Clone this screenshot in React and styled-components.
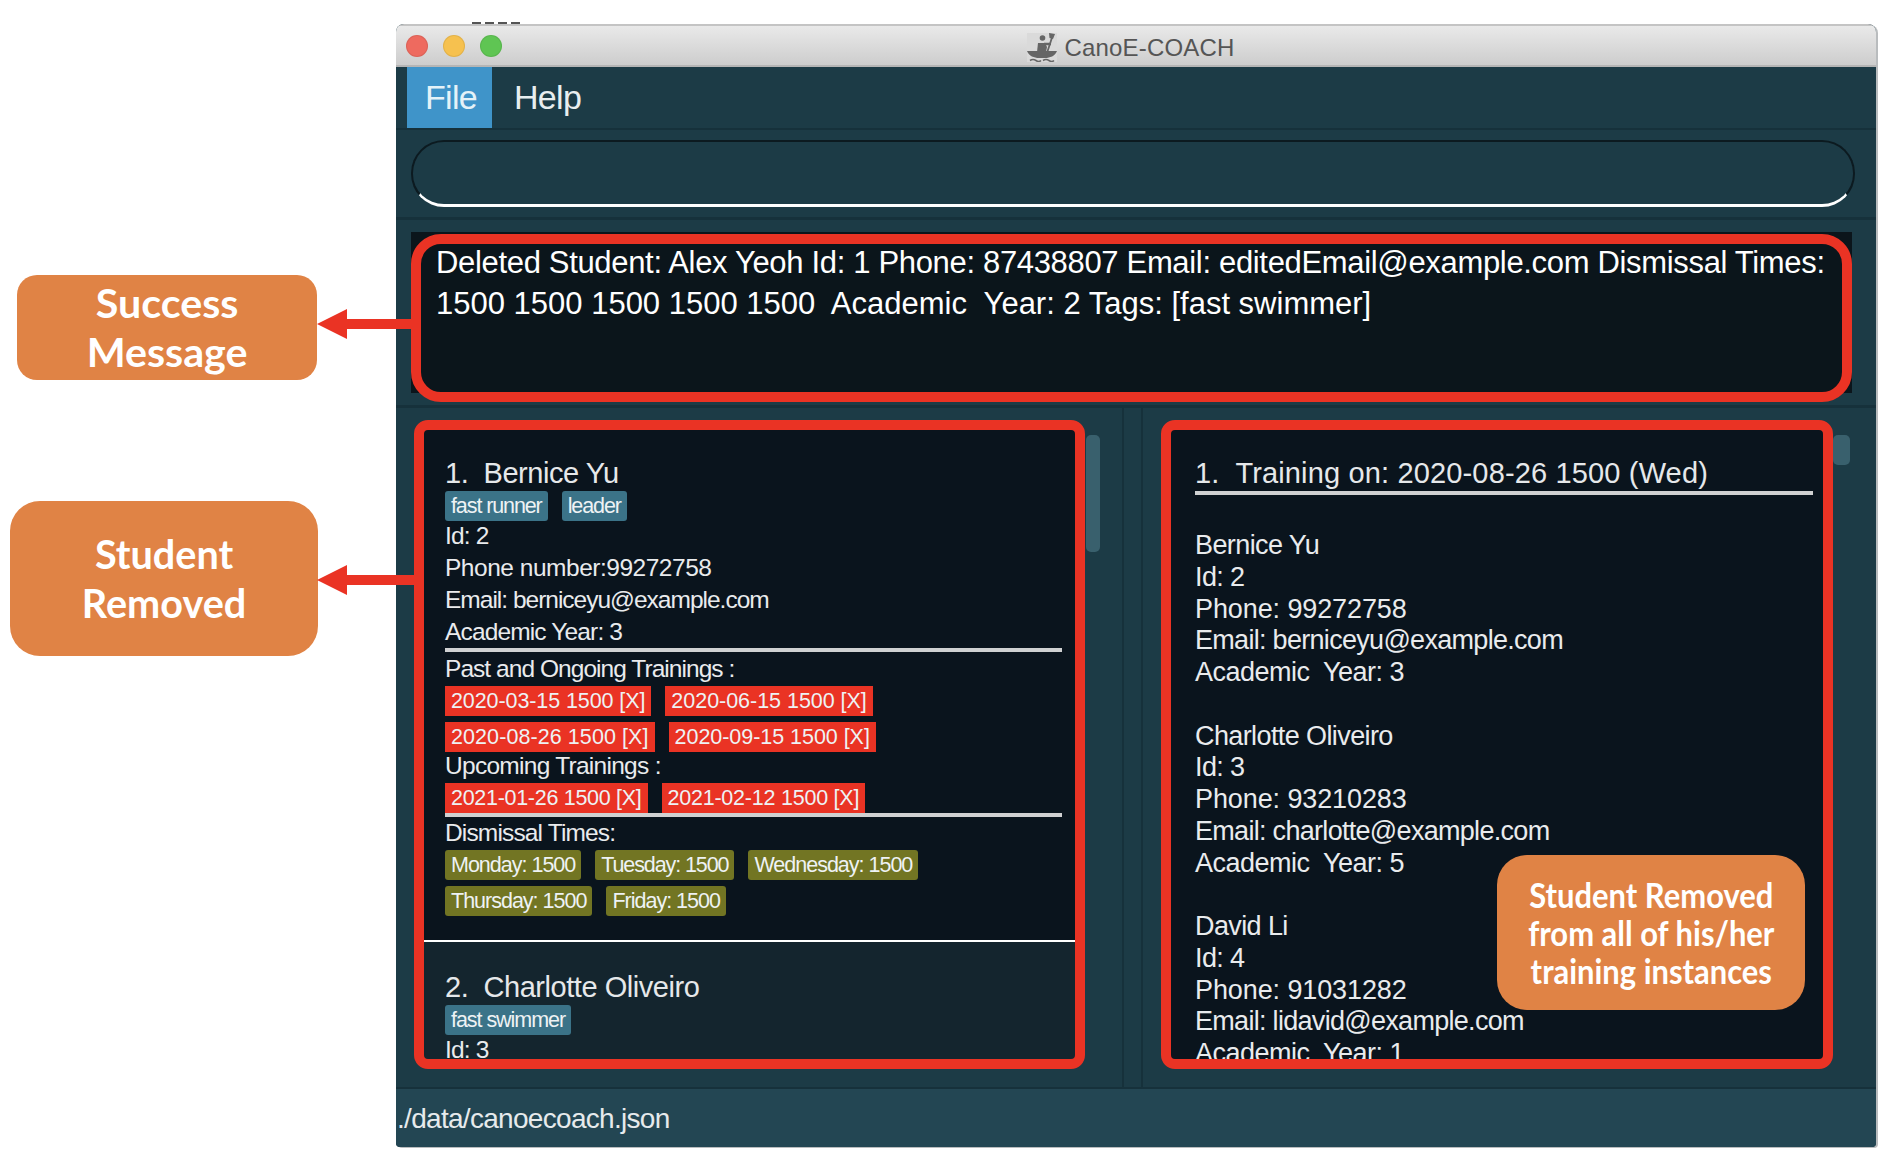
import React from "react";
import styled, { createGlobalStyle } from "styled-components";

const GlobalStyle = createGlobalStyle`
  html, body {
    margin: 0;
    padding: 0;
    background: #fff;
  }
  body {
    width: 1904px;
    height: 1174px;
    overflow: hidden;
    font-family: "Liberation Sans", Arial, sans-serif;
  }
`;

const Page = styled.div`
  position: relative;
  width: 1904px;
  height: 1174px;
  box-sizing: border-box;
  padding: 24px 0 0 396px;
`;

const BehindWindow = styled.div`
  position: absolute;
  left: 472px;
  top: 22px;
  width: 48px;
  height: 2px;
  background: repeating-linear-gradient(90deg, #555 0 9px, transparent 9px 13px);
`;

const Window = styled.div`
  width: 1480px;
  height: 1123px;
  display: flex;
  flex-direction: column;
  background: #1c3b46;
  border-radius: 8px 8px 4px 4px;
  overflow: hidden;
  box-shadow: 2px 1px 0 #b9bcbe;
`;

const TitleBar = styled.div`
  flex: 0 0 43px;
  box-sizing: border-box;
  position: relative;
  display: flex;
  align-items: center;
  justify-content: center;
  gap: 7px;
  padding: 4px 10px 0 0;
  background: linear-gradient(#e9e9e9, #cdcdcd);
  border-top: 2px solid #c4c4c4;
  border-bottom: 2px solid #b5b5b5;
  color: #555;
  font-size: 24px;
  letter-spacing: 0.2px;
`;

const Lights = styled.div`
  position: absolute;
  left: 10px;
  top: 9px;
  display: flex;
  gap: 15px;
`;

const Light = styled.span`
  width: 22px;
  height: 22px;
  border-radius: 50%;
  background: ${props => props.color};
  box-shadow: inset 0 0 0 1px rgba(0, 0, 0, 0.08);
`;

const MenuBar = styled.div`
  flex: 0 0 63px;
  box-sizing: border-box;
  display: flex;
  padding-left: 11px;
  gap: 4px;
  border-bottom: 2px solid #16313b;
`;

const MenuItem = styled.div`
  height: 61px;
  box-sizing: border-box;
  padding: 0 15px 0 18px;
  display: flex;
  align-items: center;
  font-size: 34px;
  letter-spacing: -0.7px;
  color: ${props => (props.active ? "#e4f2f8" : "#e8eeef")};
  background: ${props => (props.active ? "#3f94c9" : "transparent")};
`;

const CommandArea = styled.div`
  flex: 0 0 90px;
  box-sizing: border-box;
  padding: 10px 21px 0 15px;
  border-bottom: 3px solid #16313b;
`;

const CommandBox = styled.div`
  height: 67px;
  box-sizing: border-box;
  border: 2px solid #0c1a20;
  border-bottom: 3px solid #fff;
  border-radius: 33px;
`;

const ResultArea = styled.div`
  flex: 0 0 188px;
  box-sizing: border-box;
  padding: 12px 24px 0 15px;
  border-bottom: 3px solid #16313b;
`;

const ResultBox = styled.div`
  position: relative;
  height: 161px;
  box-sizing: border-box;
  padding: 11px 0 0 25px;
  background: #0b151b;
  color: #fff;
`;

const ResultLine = styled.div`
  font-size: 31px;
  line-height: 40.5px;
  letter-spacing: ${props => props.spacing}px;
  white-space: pre;
`;

const RedFrame = styled.div`
  position: absolute;
  top: ${props => props.top}px;
  left: ${props => props.side}px;
  right: ${props => props.side}px;
  bottom: ${props => props.bottom}px;
  border: 10px solid #ea3324;
  border-radius: ${props => props.radius}px;
  pointer-events: none;
`;

const Panels = styled.div`
  flex: 0 0 681px;
  box-sizing: border-box;
  display: flex;
  border-bottom: 2px solid #16313b;
`;

const Panel = styled.div`
  flex: 0 0 ${props => props.width}px;
  box-sizing: border-box;
  display: flex;
  align-items: flex-start;
  gap: ${props => props.gap}px;
  padding: 22px 0 0 28px;
  border-right: ${props => (props.divider ? "2px solid #16313b" : "0")};
  border-left: ${props => (props.divider ? "0" : "2px solid #16313b")};
`;

const Gutter = styled.div`
  flex: 0 0 17px;
`;

const ListFrame = styled.div`
  position: relative;
  flex: 0 0 ${props => props.width}px;
  height: 630px;
`;

const List = styled.div`
  height: 100%;
  overflow: hidden;
  background: #0a141d;
  color: #e6e8ea;
`;

const Thumb = styled.div`
  flex: 0 0 ${props => props.width}px;
  height: ${props => props.height}px;
  margin-top: 5px;
  background: #39606d;
  border-radius: 5px;
`;

const Cards = styled.div`
  margin-top: -2px;
`;

const Card = styled.div`
  padding: 29px 13px 24px 21px;
  background: ${props => (props.selected ? "#0a141d" : "#14252e")};
  border-bottom: ${props => (props.selected ? "2px solid #fff" : "0")};
`;

const Name = styled.div`
  height: 33px;
  line-height: 33px;
  margin-bottom: 1px;
  font-size: 29px;
  letter-spacing: -0.45px;
  white-space: pre;
`;

const Line = styled.div`
  height: ${props => props.height || 32}px;
  line-height: 30px;
  font-size: 24.5px;
  letter-spacing: ${props => props.spacing || -0.85}px;
  white-space: pre;
  color: #e9ebed;
`;

const SectionLine = styled.div`
  height: 31px;
  line-height: 28px;
  font-size: 24.5px;
  letter-spacing: ${props => props.spacing}px;
  white-space: pre;
  color: #e9ebed;
`;

const Rule = styled.div`
  height: 4px;
  margin: ${props => props.margin};
  background: #d0d1d2;
`;

const TagRow = styled.div`
  display: flex;
  flex-wrap: wrap;
  gap: 6px 14px;
`;

const Tag = styled.span`
  height: 30px;
  box-sizing: border-box;
  padding: 0 6px;
  line-height: 31px;
  font-size: 21.5px;
  letter-spacing: ${props => props.spacing}px;
  white-space: pre;
  color: #eef2f4;
  background: ${props => props.background};
  border-radius: ${props => props.radius}px;
`;

const TrainingBody = styled.div`
  padding: 27px 0 0 24px;
`;

const TrainingTitle = styled.div`
  height: 33px;
  margin-right: 10px;
  line-height: 33px;
  font-size: 29px;
  letter-spacing: 0.15px;
  white-space: pre;
`;

const TrainingRule = styled.div`
  height: 4px;
  margin: 1px 10px 35px 0;
  background: #d0d1d2;
`;

const Attendee = styled.div`
  margin-bottom: 31.75px;
`;

const AttendeeLine = styled.div`
  font-size: 27px;
  line-height: 31.75px;
  letter-spacing: ${props => props.spacing || -0.6}px;
  white-space: pre;
  color: #e9ebed;
`;

const StatusBar = styled.div`
  flex: 1 1 auto;
  display: flex;
  align-items: center;
  padding: 2px 0 0 1px;
  background: #234653;
  color: #e6eaec;
  font-size: 28px;
  letter-spacing: -0.7px;
`;

const Callout = styled.div`
  position: absolute;
  left: ${props => props.left}px;
  top: ${props => props.top}px;
  width: ${props => props.width}px;
  height: ${props => props.height}px;
  display: flex;
  align-items: center;
  justify-content: center;
  text-align: center;
  white-space: pre;
  background: #e08345;
  border-radius: ${props => props.radius}px;
  color: #fff;
  font-family: "Lato", sans-serif;
  font-weight: 700;
  font-size: ${props => props.size}px;
  line-height: ${props => props.leading}px;
`;

const CalloutText = styled.span`
  display: inline-block;
  transform: scaleX(${props => props.squeeze});
`;

const Arrow = styled.svg`
  position: absolute;
  left: 317px;
  top: ${props => props.top}px;
`;

const CanoeIcon = () => (
  <svg width="30" height="29" viewBox="0 0 30 29">
    <rect width="30" height="29" fill="#dadada" />
    <circle cx="15.5" cy="5" r="2.8" fill="#666" />
    <path d="M11 10 L18 10 L20 14 L19 19 L10 19 Z" fill="#666" />
    <path d="M17 11 L24 11" stroke="#666" strokeWidth="2.4" fill="none" />
    <path d="M25.5 3 L19 23" stroke="#666" strokeWidth="1.8" fill="none" />
    <path d="M22 0 L28 1 L26 6 L22.5 5 Z" fill="#666" />
    <path d="M0 18 L30 18 C28 23 23 25 18 25 L12 25 C7 25 2 23 0 18 Z" fill="#666" />
    <path d="M3 27.5 Q6 25.5 9 27.5 T14 27.5 M16 27.5 Q19 25.5 22 27.5 T27 27.5" stroke="#666" strokeWidth="1.6" fill="none" />
  </svg>
);

const LeftArrow = ({ top, width }) => (
  <Arrow top={top} width={width} height="30" viewBox={`0 0 ${width} 30`}>
    <path d={`M0 15 L30 0 L30 10 L${width} 10 L${width} 20 L30 20 L30 30 Z`} fill="#ea3324" />
  </Arrow>
);

const attendees = [
  ["Bernice Yu", "2", "99272758", "berniceyu@example.com", "3"],
  ["Charlotte Oliveiro", "3", "93210283", "charlotte@example.com", "5"],
  ["David Li", "4", "91031282", "lidavid@example.com", "1"],
];

const RED = "#ea3324";
const OLIVE = "#727523";
const TEAL = "#3b7388";

const App = () => (
  <Page>
    <GlobalStyle />
    <BehindWindow />
    <Window>
      <TitleBar>
        <Lights>
          <Light color="#ee6a5f" />
          <Light color="#f6c14f" />
          <Light color="#5fc553" />
        </Lights>
        <CanoeIcon />
        <span>CanoE-COACH</span>
      </TitleBar>
      <MenuBar>
        <MenuItem active>File</MenuItem>
        <MenuItem>Help</MenuItem>
      </MenuBar>
      <CommandArea>
        <CommandBox />
      </CommandArea>
      <ResultArea>
        <ResultBox>
          <ResultLine spacing={-0.33}>Deleted Student: Alex Yeoh Id: 1 Phone: 87438807 Email: editedEmail@example.com Dismissal Times:</ResultLine>
          <ResultLine spacing={0}>{"1500 1500 1500 1500 1500  Academic  Year: 2 Tags: [fast swimmer]"}</ResultLine>
          <RedFrame top={2} side={0} bottom={-9} radius={30} />
        </ResultBox>
      </ResultArea>
      <Panels>
        <Panel width={728} gap={11} divider>
          <ListFrame width={651}>
            <List>
              <Cards>
                <Card selected>
                  <Name>{"1.  Bernice Yu"}</Name>
                  <TagRow>
                    <Tag background={TEAL} radius={3} spacing={-1.1}>fast runner</Tag>
                    <Tag background={TEAL} radius={3} spacing={-1.1}>leader</Tag>
                  </TagRow>
                  <Line>Id: 2</Line>
                  <Line spacing={-0.48}>Phone number:99272758</Line>
                  <Line spacing={-1}>Email: berniceyu@example.com</Line>
                  <Line height={31}>Academic Year: 3</Line>
                  <Rule margin="0 0 3px" />
                  <SectionLine spacing={-0.95}>Past and Ongoing Trainings :</SectionLine>
                  <TagRow>
                    <Tag background={RED} radius={0} spacing={-0.09}>2020-03-15 1500 [X]</Tag>
                    <Tag background={RED} radius={0} spacing={-0.03}>2020-06-15 1500 [X]</Tag>
                    <Tag background={RED} radius={0} spacing={0.08}>2020-08-26 1500 [X]</Tag>
                    <Tag background={RED} radius={0} spacing={-0.04}>2020-09-15 1500 [X]</Tag>
                  </TagRow>
                  <SectionLine spacing={-0.72}>Upcoming Trainings :</SectionLine>
                  <TagRow>
                    <Tag background={RED} radius={0} spacing={-0.29}>2021-01-26 1500 [X]</Tag>
                    <Tag background={RED} radius={0} spacing={-0.23}>2021-02-12 1500 [X]</Tag>
                  </TagRow>
                  <Rule margin="0 0 1px" />
                  <Line>Dismissal Times:</Line>
                  <TagRow>
                    <Tag background={OLIVE} radius={3} spacing={-1}>Monday: 1500</Tag>
                    <Tag background={OLIVE} radius={3} spacing={-1.1}>Tuesday: 1500</Tag>
                    <Tag background={OLIVE} radius={3} spacing={-1}>Wednesday: 1500</Tag>
                    <Tag background={OLIVE} radius={3} spacing={-1}>Thursday: 1500</Tag>
                    <Tag background={OLIVE} radius={3} spacing={-1}>Friday: 1500</Tag>
                  </TagRow>
                </Card>
                <Card>
                  <Name>{"2.  Charlotte Oliveiro"}</Name>
                  <TagRow>
                    <Tag background={TEAL} radius={3} spacing={-1.05}>fast swimmer</Tag>
                  </TagRow>
                  <Line>Id: 3</Line>
                </Card>
              </Cards>
            </List>
            <RedFrame top={-10} side={-10} bottom={-9} radius={14} />
          </ListFrame>
          <Thumb width={14} height={117} />
        </Panel>
        <Gutter />
        <Panel width={735} gap={10}>
          <ListFrame width={652}>
            <List>
              <TrainingBody>
                <TrainingTitle>{"1.  Training on: 2020-08-26 1500 (Wed)"}</TrainingTitle>
                <TrainingRule />
                {attendees.map(([name, id, phone, email, year]) => (
                  <Attendee key={id}>
                    <AttendeeLine>{name}</AttendeeLine>
                    <AttendeeLine>{`Id: ${id}`}</AttendeeLine>
                    <AttendeeLine spacing={-0.1}>{`Phone: ${phone}`}</AttendeeLine>
                    <AttendeeLine spacing={-0.7}>{`Email: ${email}`}</AttendeeLine>
                    <AttendeeLine spacing={-0.5}>{`Academic  Year: ${year}`}</AttendeeLine>
                  </Attendee>
                ))}
              </TrainingBody>
            </List>
            <RedFrame top={-10} side={-10} bottom={-9} radius={14} />
            <Callout left={326} top={425} width={308} height={155} radius={30} size={34} leading={38}>
              <CalloutText squeeze={0.91}>{"Student Removed\nfrom all of his/her\ntraining instances"}</CalloutText>
            </Callout>
          </ListFrame>
          <Thumb width={17} height={30} />
        </Panel>
      </Panels>
      <StatusBar>./data/canoecoach.json</StatusBar>
    </Window>
    <Callout left={17} top={275} width={300} height={105} radius={20} size={40} leading={49}>
      <CalloutText squeeze={1.03}>{"Success\nMessage"}</CalloutText>
    </Callout>
    <LeftArrow top={309} width={94} />
    <Callout left={10} top={501} width={308} height={155} radius={30} size={40} leading={49}>
      <CalloutText squeeze={0.99}>{"Student\nRemoved"}</CalloutText>
    </Callout>
    <LeftArrow top={565} width={97} />
  </Page>
);

export default App;
